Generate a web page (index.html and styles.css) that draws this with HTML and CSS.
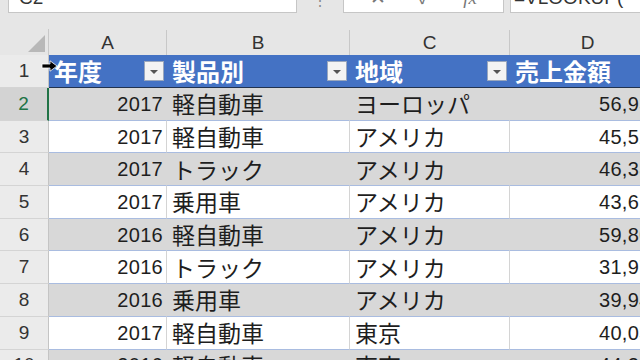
FILE: index.html
```html
<!DOCTYPE html>
<html lang="ja">
<head>
    <meta charset="UTF-8">
    <title>売上データ - Excel</title>
    <link rel="stylesheet" href="styles.css">
</head>
<body>
    <div class="app">
        <!-- 数式バー -->
        <div class="formula-bar">
            <div class="name-box">C2</div>
            <div class="grip">⋮</div>
            <div class="fx-buttons">
                <span>✕</span>
                <span>✓</span>
                <span class="fx">fx</span>
            </div>
            <div class="formula">=VLOOKUP(</div>
        </div>

        <!-- シート -->
        <div class="sheet">
            <div class="row">
                <div class="corner"><span class="corner-tri"></span></div>
                <div class="ch">A</div>
                <div class="ch">B</div>
                <div class="ch">C</div>
                <div class="ch">D</div>
            </div>

            <div class="row head">
                <div class="rh">1</div>
                <div class="c th">年度<span class="filter"></span></div>
                <div class="c th">製品別<span class="filter"></span></div>
                <div class="c th">地域<span class="filter"></span></div>
                <div class="c th">売上金額<span class="filter"></span></div>
            </div>

            <div class="row band active">
                <div class="rh">2</div>
                <div class="c num">2017</div>
                <div class="c">軽自動車</div>
                <div class="c">ヨーロッパ</div>
                <div class="c num">56,932</div>
            </div>
            <div class="row">
                <div class="rh">3</div>
                <div class="c num">2017</div>
                <div class="c">軽自動車</div>
                <div class="c">アメリカ</div>
                <div class="c num">45,521</div>
            </div>
            <div class="row band">
                <div class="rh">4</div>
                <div class="c num">2017</div>
                <div class="c">トラック</div>
                <div class="c">アメリカ</div>
                <div class="c num">46,387</div>
            </div>
            <div class="row">
                <div class="rh">5</div>
                <div class="c num">2017</div>
                <div class="c">乗用車</div>
                <div class="c">アメリカ</div>
                <div class="c num">43,615</div>
            </div>
            <div class="row band">
                <div class="rh">6</div>
                <div class="c num">2016</div>
                <div class="c">軽自動車</div>
                <div class="c">アメリカ</div>
                <div class="c num">59,804</div>
            </div>
            <div class="row">
                <div class="rh">7</div>
                <div class="c num">2016</div>
                <div class="c">トラック</div>
                <div class="c">アメリカ</div>
                <div class="c num">31,970</div>
            </div>
            <div class="row band">
                <div class="rh">8</div>
                <div class="c num">2016</div>
                <div class="c">乗用車</div>
                <div class="c">アメリカ</div>
                <div class="c num">39,948</div>
            </div>
            <div class="row">
                <div class="rh">9</div>
                <div class="c num">2017</div>
                <div class="c">軽自動車</div>
                <div class="c">東京</div>
                <div class="c num">40,036</div>
            </div>
            <div class="row band">
                <div class="rh">10</div>
                <div class="c num">2016</div>
                <div class="c">軽自動車</div>
                <div class="c">東京</div>
                <div class="c num">44,210</div>
            </div>

            <!-- 列選択カーソル -->
            <svg class="cursor" width="17" height="12" viewBox="0 0 17 12">
                <path d="M1 4 H9 V0.8 L16 6 L9 11.2 V8 H1 Z" fill="#000" stroke="#fff" stroke-width="0.8"/>
            </svg>
        </div>
    </div>
</body>
</html>
```

FILE: styles.css
```css
html, body {
    margin: 0;
    padding: 0;
    height: 100%;
    overflow: hidden;
    background-color: #e6e6e6;
    font-family: "Liberation Sans", "Noto Sans CJK JP", sans-serif;
}

.app {
    width: 640px;
    height: 360px;
    overflow: hidden;
}

/* Formula bar */
.formula-bar {
    display: flex;
    align-items: flex-start;
    height: 14px;
    margin-bottom: 15px;
    overflow: visible;
}

.name-box,
.fx-buttons,
.formula {
    height: 26px;
    margin-top: -13px;
    background-color: #fff;
    border: 1px solid #c6c6c6;
    box-sizing: border-box;
    overflow: hidden;
    color: #333;
    font-size: 19px;
    line-height: 20px;
}

.name-box {
    width: 289px;
    margin-left: 8px;
    padding-left: 10px;
}

.grip {
    width: 46px;
    text-align: center;
    color: #888;
    font-size: 14px;
    line-height: 6px;
    margin-top: -2px;
}

.fx-buttons {
    width: 161px;
    display: flex;
    justify-content: space-around;
    color: #777;
    padding: 0 10px;
}

.fx-buttons .fx {
    font-style: italic;
    font-family: "Liberation Serif", serif;
}

.formula {
    flex: 1;
    margin-left: 6px;
    padding-left: 3px;
    border-right: none;
}

/* Sheet grid */
.sheet {
    position: relative;
    display: grid;
    grid-template-columns: 49px 118px 183px 160px 156px;
    grid-template-rows: 26px 33px repeat(9, 32.7px);
    width: 666px;
}

.row {
    display: contents;
}

.corner {
    position: relative;
    border-right: 1px solid #c8c8c8;
}

.corner-tri {
    position: absolute;
    right: 3px;
    bottom: 3px;
    width: 0;
    height: 0;
    border-left: 17px solid transparent;
    border-bottom: 17px solid #b8b8b8;
}

.ch {
    display: flex;
    align-items: center;
    justify-content: center;
    border-right: 1px solid #c8c8c8;
    margin-top: 1px;
    font-size: 19px;
    color: #333;
}

.rh {
    display: flex;
    align-items: center;
    justify-content: center;
    background-color: #ebebeb;
    border-right: 1px solid #c4c4c4;
    border-bottom: 1px solid #d4d4d4;
    font-size: 19px;
    color: #333;
}

.active .rh {
    background-color: #d3d3d3;
    color: #217346;
    border-right: 2px solid #217346;
}

.c {
    display: flex;
    align-items: center;
    padding: 0 5px;
    background-color: #fff;
    border-right: 1px solid #d4d4d4;
    border-bottom: 1px solid #a9bce0;
    font-family: "Noto Sans CJK JP", sans-serif;
    font-size: 23px;
    line-height: 1;
    color: #1e1e1e;
    white-space: nowrap;
    overflow: hidden;
}

.c.num {
    justify-content: flex-end;
    padding-right: 3px;
    font-family: "Liberation Sans", sans-serif;
    font-size: 20px;
    letter-spacing: 0.3px;
}

.band .c {
    background-color: #d8d8d8;
    border-right-color: #d8d8d8;
}

/* Table header */
.head .c {
    background-color: #4472c4;
    border-right: none;
    border-bottom: 1px solid #22334f;
    color: #fff;
}

.th {
    justify-content: space-between;
    font-weight: bold;
    font-size: 24px;
    padding-right: 3px;
}

.filter {
    position: relative;
    flex: none;
    width: 20px;
    height: 20px;
    box-sizing: border-box;
    background-color: #f3f3f3;
    border: 1px solid #9aa7bd;
}

.filter::after {
    content: "";
    position: absolute;
    left: 5px;
    top: 8px;
    border-left: 4px solid transparent;
    border-right: 4px solid transparent;
    border-top: 4px solid #555;
}

/* Cursor */
.cursor {
    position: absolute;
    left: 41px;
    top: 31px;
}
```
